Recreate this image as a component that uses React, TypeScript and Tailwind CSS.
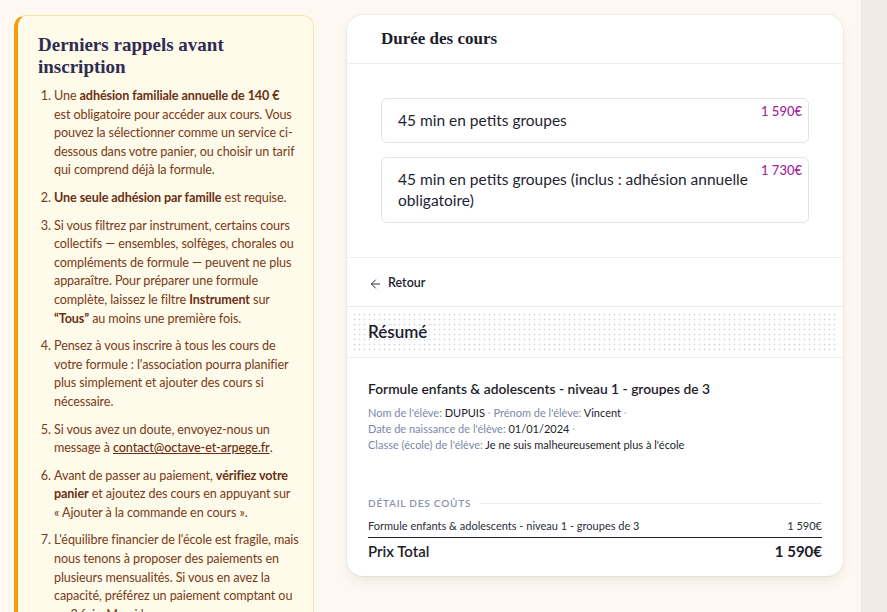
import { ArrowLeft } from 'lucide-react';

const sans = { fontFamily: 'Lato, "Noto Sans", sans-serif' };
const serif = { fontFamily: '"Liberation Serif", "DejaVu Serif", serif' };

const options = [
  { label: '45 min en petits groupes', price: '1 590€' },
  { label: '45 min en petits groupes (inclus : adhésion annuelle obligatoire)', price: '1 730€' },
];

function Reminders() {
  return (
    <aside className="w-[300px] shrink-0 mt-[15px] rounded-t-xl border border-[#fbe3a0] border-l-4 border-l-[#f59e0b] bg-[#fefbea] pl-5 pr-[14px] pt-[18px] pb-6 text-[#7a3a17]">
      <h2 className="text-[19px] leading-[22px] font-bold text-[#2f2c52]" style={serif}>
        Derniers rappels avant inscription
      </h2>
      <ol className="mt-[9px] list-decimal pl-4 text-[12.6px] leading-[18.6px] tracking-[-0.1px] space-y-[9px]" style={sans}>
        <li>
          Une <b className="text-[#6b2f12]">adhésion familiale annuelle de 140 €</b> {'est\u00a0obligatoire'} pour accéder aux
          cours. Vous pouvez la sélectionner comme un service ci-dessous dans votre panier, ou choisir un tarif qui comprend
          déjà la formule.
        </li>
        <li>
          <b className="text-[#6b2f12]">Une seule adhésion par famille</b> est requise.
        </li>
        <li>
          Si vous filtrez par instrument, certains cours collectifs — ensembles, solfèges, chorales ou compléments de formule —
          peuvent ne plus apparaître. Pour préparer une formule complète, laissez le filtre{' '}
          <b className="text-[#6b2f12]">Instrument</b> sur <b className="text-[#6b2f12]">“Tous”</b> au moins une première fois.
        </li>
        <li>
          Pensez à vous inscrire à tous les cours de votre formule : l'association pourra planifier plus simplement et ajouter
          des cours si nécessaire.
        </li>
        <li>
          Si vous avez un doute, envoyez-nous un message à{' '}
          <a className="underline text-[#6b2f12] font-medium">contact@octave-et-arpege.fr</a>.
        </li>
        <li>
          Avant de passer au paiement, <b className="text-[#6b2f12]">vérifiez votre panier</b> et ajoutez des cours en appuyant
          sur {'«\u00a0Ajouter'} à la commande en cours {'»'}.
        </li>
        <li>
          L'équilibre financier de l'école est fragile, mais nous tenons à proposer des paiements en plusieurs mensualités. Si
          vous en avez la capacité, préférez un paiement comptant ou en 3 fois. Merci !
        </li>
      </ol>
    </aside>
  );
}

function DurationCard() {
  return (
    <section className="w-[496px] shrink-0 mt-[15px] self-start rounded-2xl bg-white shadow-[0_6px_14px_-4px_rgba(120,100,80,0.18),0_0_0_1px_rgba(0,0,0,0.04)] overflow-hidden" style={sans}>
      <div className="h-[49px] flex items-center px-[34px] border-b border-[#eceef2]">
        <h3 className="text-[17px] font-bold text-[#1d1d2b]" style={serif}>
          Durée des cours
        </h3>
      </div>

      <div className="px-[34px] pt-[34px] pb-[34px] flex flex-col gap-[14px]">
        {options.map((o) => (
          <button
            key={o.price}
            className="relative text-left rounded-md border border-[#e2e4ea] pl-4 pr-[58px] py-[11px] min-h-[45px]"
          >
            <span className="block text-[15.5px] leading-[21px] text-[#1f2433]">{o.label}</span>
            <span className="absolute right-[6px] top-[3px] text-[13px] font-medium text-[#a3269b]">{o.price}</span>
          </button>
        ))}
      </div>

      <div className="border-t border-[#eceef2] h-[49px] flex items-center pt-[3px] px-[21px] gap-[5px] text-[12.5px] font-semibold text-[#1f2433]">
        <ArrowLeft className="h-[14px] w-[15px]" strokeWidth={1.6} />
        Retour
      </div>

      <div className="border-t border-[#e6e8ee] p-[5px]">
        <div className="h-[40px] flex items-center pl-4 bg-[radial-gradient(circle,#d4d6dc_0.8px,transparent_1.1px)] bg-size-[5px_5px]">
          <span className="text-[17px] font-semibold text-[#1d1d2b]">Résumé</span>
        </div>
      </div>

      <div className="border-t border-[#eceef2] px-[21px] pt-[21px] pb-[13px]">
        <p className="text-[13.8px] font-semibold text-[#1d1d2b]">Formule enfants &amp; adolescents - niveau 1 - groupes de 3</p>
        <div className="mt-[5px] text-[11px] leading-[16px]">
          <p>
            <span className="text-[#7d87a6]">Nom de l'élève: </span>
            <span className="text-[#1d1d2b]">DUPUIS</span>
            <span className="text-[#b8bccb]"> · </span>
            <span className="text-[#7d87a6]">Prénom de l'élève: </span>
            <span className="text-[#1d1d2b]">Vincent</span>
            <span className="text-[#b8bccb]"> ·</span>
          </p>
          <p>
            <span className="text-[#7d87a6]">Date de naissance de l'élève: </span>
            <span className="text-[#1d1d2b]">01/01/2024</span>
            <span className="text-[#b8bccb]"> ·</span>
          </p>
          <p>
            <span className="text-[#7d87a6]">Classe (école) de l'élève: </span>
            <span className="text-[#1d1d2b]">Je ne suis malheureusement plus à l'école</span>
          </p>
        </div>

        <div className="mt-[43px] flex items-center gap-2">
          <span className="text-[10px] font-semibold tracking-[0.08em] text-[#8a92ab]">DÉTAIL DES COÛTS</span>
          <span className="flex-1 h-px bg-[#eceef2]" />
        </div>
        <div className="mt-[7px] pb-[3px] flex justify-between text-[11px] text-[#2a2d3a] border-b border-[#1d1d2b]">
          <span>Formule enfants &amp; adolescents - niveau 1 - groupes de 3</span>
          <span>1 590€</span>
        </div>
        <div className="mt-[2px] flex justify-between text-[15px] font-semibold text-[#1d1d2b]">
          <span>Prix Total</span>
          <span className="font-bold">1 590€</span>
        </div>
      </div>
    </section>
  );
}

export default function App() {
  return (
    <div className="h-screen overflow-hidden flex bg-[#fdf8f2]">
      <div className="flex-1 flex items-start pl-[14px]">
        <Reminders />
        <div className="ml-[33px]">
          <DurationCard />
        </div>
      </div>
      <div className="w-[26px] shrink-0 bg-[#f1ebe6]" />
    </div>
  );
}
